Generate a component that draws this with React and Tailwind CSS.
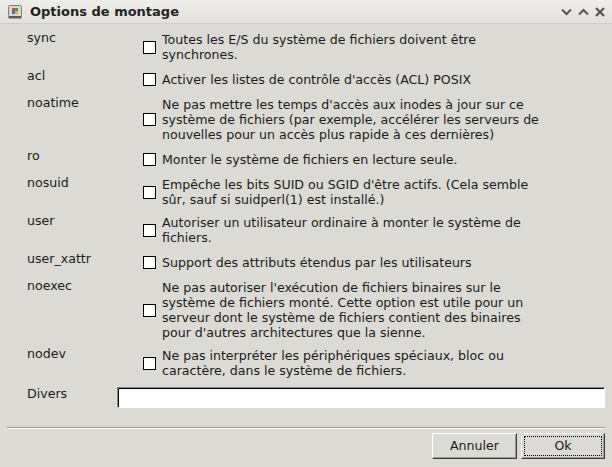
import React from 'react';

const options = [
  { name: 'sync', lines: ['Toutes les E/S du système de fichiers doivent être', 'synchrones.'] },
  { name: 'acl', lines: ["Activer les listes de contrôle d'accès (ACL) POSIX"] },
  {
    name: 'noatime',
    lines: [
      "Ne pas mettre les temps d'accès aux inodes à jour sur ce",
      'système de fichiers (par exemple, accélérer les serveurs de',
      'nouvelles pour un accès plus rapide à ces dernières)',
    ],
  },
  { name: 'ro', lines: ['Monter le système de fichiers en lecture seule.'] },
  {
    name: 'nosuid',
    lines: ["Empêche les bits SUID ou SGID d'être actifs. (Cela semble", 'sûr, sauf si suidperl(1) est installé.)'],
  },
  { name: 'user', lines: ['Autoriser un utilisateur ordinaire à monter le système de', 'fichiers.'] },
  { name: 'user_xattr', lines: ['Support des attributs étendus par les utilisateurs'] },
  {
    name: 'noexec',
    lines: [
      "Ne pas autoriser l'exécution de fichiers binaires sur le",
      'système de fichiers monté. Cette option est utile pour un',
      'serveur dont le système de fichiers contient des binaires',
      "pour d'autres architectures que la sienne.",
    ],
  },
  {
    name: 'nodev',
    lines: ['Ne pas interpréter les périphériques spéciaux, bloc ou', 'caractère, dans le système de fichiers.'],
  },
];

function DriveIcon() {
  return (
    <svg width="16" height="16" viewBox="0 0 16 16">
      <rect x="1.5" y="1.5" width="13" height="11" rx="1" fill="#d8d8d6" stroke="#7d7d7b" />
      <rect x="1.5" y="12" width="13" height="2.5" fill="#5c5c5a" />
      <rect x="5" y="4" width="3" height="3" fill="#e04a2a" />
      <rect x="8" y="4" width="3" height="3" fill="#3aa43a" />
      <rect x="5" y="7" width="3" height="3" fill="#3a6ad8" />
      <rect x="8" y="7" width="3" height="3" fill="#f0b020" />
    </svg>
  );
}

function WindowButtons() {
  return (
    <div className="flex items-center gap-[6px]">
      <svg width="11" height="8" viewBox="0 0 11 8">
        <path d="M1 1.5 L5.5 6 L10 1.5" fill="none" stroke="#555" strokeWidth="2" />
      </svg>
      <svg width="11" height="8" viewBox="0 0 11 8">
        <path d="M1 6.5 L5.5 2 L10 6.5" fill="none" stroke="#555" strokeWidth="2" />
      </svg>
      <svg width="10" height="10" viewBox="0 0 10 10">
        <path d="M1 1 L9 9 M9 1 L1 9" fill="none" stroke="#555" strokeWidth="2.2" />
      </svg>
    </div>
  );
}

function Checkbox() {
  return <div className="w-[13px] h-[13px] border border-black bg-white shrink-0" />;
}

function Button({ children, focused }) {
  return (
    <div className="h-[26px] bg-[#dcdad5] border border-t-white border-l-white border-b-[#3c3b37] border-r-[#3c3b37] shadow-[inset_-1px_-1px_0_#9d9b96] flex items-stretch p-[2px]">
      <div
        className={
          focused
            ? 'flex-1 flex items-center justify-center border border-dotted border-black'
            : 'flex-1 flex items-center justify-center'
        }
      >
        {children}
      </div>
    </div>
  );
}

export default function App() {
  return (
    <div
      className="w-[612px] h-[467px] bg-[#dcdad5] text-[#1a1a1a] flex flex-col overflow-hidden"
      style={{ fontFamily: '"DejaVu Sans", Verdana, sans-serif' }}
    >
      {/* Title bar */}
      <div className="h-[24px] shrink-0 bg-gradient-to-b from-[#efeeeb] to-[#e3e1dd] border-b border-[#cfcdc8] flex items-center pl-[7px] pr-[7px]">
        <DriveIcon />
        <span className="ml-[7px] text-[13px] font-bold text-[#222]">Options de montage</span>
        <div className="ml-auto">
          <WindowButtons />
        </div>
      </div>

      {/* Options */}
      <div className="shrink-0 pl-[27px] pt-[4px] text-[12.6px] leading-[15px]">
        {options.map((opt) => (
          <div key={opt.name} className="flex">
            <div className="w-[116px] shrink-0 pt-[2px]">{opt.name}</div>
            <div className="flex items-center min-h-[27px] py-[4px]">
              <Checkbox />
              <div className="ml-[6px] whitespace-nowrap">
                {opt.lines.map((l, i) => (
                  <div key={i}>{l}</div>
                ))}
              </div>
            </div>
          </div>
        ))}

        <div className="flex mt-[4px]">
          <div className="w-[90px] shrink-0">Divers</div>
          <div className="mt-[1px] w-[488px] h-[21px] border border-t-[#8d8b87] border-l-[#8d8b87] border-b-white border-r-white">
            <div className="w-full h-full bg-white border-t border-l border-black" />
          </div>
        </div>
      </div>

      {/* Separator */}
      <div className="shrink-0 mx-[7px] mt-[19px] h-[2px] border-t border-[#9e9b95] border-b border-b-white" />

      {/* Buttons */}
      <div className="shrink-0 flex justify-end gap-[4px] pr-[7px] mt-[4px] text-[12.6px]">
        <div className="w-[85px]">
          <Button>Annuler</Button>
        </div>
        <div className="w-[84px]">
          <Button focused>Ok</Button>
        </div>
      </div>
    </div>
  );
}
